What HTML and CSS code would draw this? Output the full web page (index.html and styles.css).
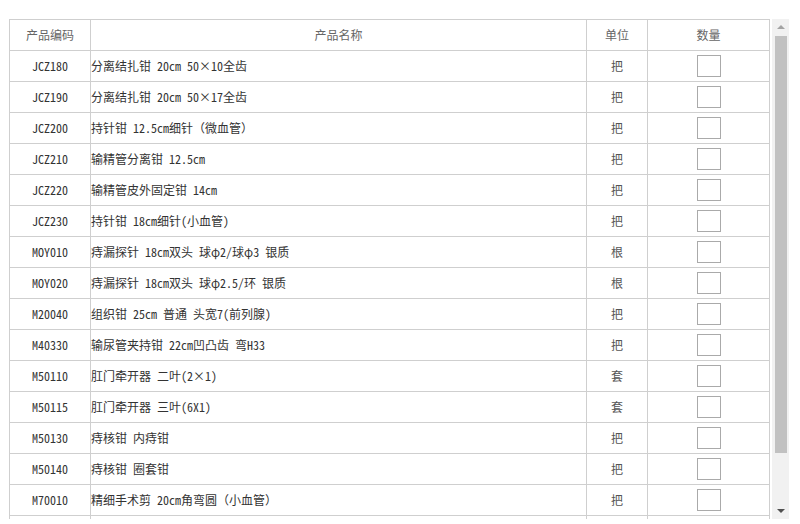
FILE: index.html
```html
<!DOCTYPE html>
<html>
<head>
<meta charset="utf-8">
<link rel="stylesheet" href="styles.css">
</head>
<body>
<div class="frame">
  <div class="viewport">
    <table class="grid">
      <colgroup>
        <col class="c-code"><col class="c-name"><col class="c-unit"><col class="c-qty">
      </colgroup>
      <thead>
        <tr><th>产品编码</th><th>产品名称</th><th>单位</th><th>数量</th></tr>
      </thead>
      <tbody>
        <tr><td class="code">JCZ180</td><td class="name">分离结扎钳 20cm 50×10全齿</td><td class="unit">把</td><td class="qty"><span class="box"></span></td></tr>
        <tr><td class="code">JCZ190</td><td class="name">分离结扎钳 20cm 50×17全齿</td><td class="unit">把</td><td class="qty"><span class="box"></span></td></tr>
        <tr><td class="code">JCZ200</td><td class="name">持针钳 12.5cm细针（微血管）</td><td class="unit">把</td><td class="qty"><span class="box"></span></td></tr>
        <tr><td class="code">JCZ210</td><td class="name">输精管分离钳 12.5cm</td><td class="unit">把</td><td class="qty"><span class="box"></span></td></tr>
        <tr><td class="code">JCZ220</td><td class="name">输精管皮外固定钳 14cm</td><td class="unit">把</td><td class="qty"><span class="box"></span></td></tr>
        <tr><td class="code">JCZ230</td><td class="name">持针钳 18cm细针(小血管)</td><td class="unit">把</td><td class="qty"><span class="box"></span></td></tr>
        <tr><td class="code">MOY010</td><td class="name">痔漏探针 18cm双头 球φ2/球φ3 银质</td><td class="unit">根</td><td class="qty"><span class="box"></span></td></tr>
        <tr><td class="code">MOY020</td><td class="name">痔漏探针 18cm双头 球φ2.5/环 银质</td><td class="unit">根</td><td class="qty"><span class="box"></span></td></tr>
        <tr><td class="code">M20040</td><td class="name">组织钳 25cm 普通 头宽7(前列腺)</td><td class="unit">把</td><td class="qty"><span class="box"></span></td></tr>
        <tr><td class="code">M40330</td><td class="name">输尿管夹持钳 22cm凹凸齿 弯H33</td><td class="unit">把</td><td class="qty"><span class="box"></span></td></tr>
        <tr><td class="code">M50110</td><td class="name">肛门牵开器 二叶(2×1)</td><td class="unit">套</td><td class="qty"><span class="box"></span></td></tr>
        <tr><td class="code">M50115</td><td class="name">肛门牵开器 三叶(6X1)</td><td class="unit">套</td><td class="qty"><span class="box"></span></td></tr>
        <tr><td class="code">M50130</td><td class="name">痔核钳 内痔钳</td><td class="unit">把</td><td class="qty"><span class="box"></span></td></tr>
        <tr><td class="code">M50140</td><td class="name">痔核钳 圈套钳</td><td class="unit">把</td><td class="qty"><span class="box"></span></td></tr>
        <tr><td class="code">M70010</td><td class="name">精细手术剪 20cm角弯圆（小血管）</td><td class="unit">把</td><td class="qty"><span class="box"></span></td></tr>
        <tr><td class="code"></td><td class="name"></td><td class="unit"></td><td class="qty"></td></tr>
      </tbody>
    </table>
  </div>
  <div class="scrollbar">
    <span class="arrow up"></span>
    <div class="track"><div class="thumb"></div></div>
    <span class="arrow down"></span>
  </div>
</div>
</body>
</html>
```

FILE: styles.css
```css
html, body {
  margin: 0;
  padding: 0;
  background: #fff;
}
body {
  padding: 19px 0 0 9px;
  font-family: "Noto Sans Mono CJK SC", "Noto Sans CJK SC", "DejaVu Sans Mono", monospace;
  font-size: 12px;
  color: #333;
}
.frame {
  display: flex;
  width: 780px;
  height: 500px;
}
.viewport {
  width: 763px;
  height: 500px;
  overflow: hidden;
}
.grid {
  border-collapse: collapse;
  width: 760px;
  table-layout: fixed;
}
.c-code { width: 81px; }
.c-name { width: 496px; }
.c-unit { width: 61px; }
.c-qty { width: 122px; }
.grid th, .grid td {
  border: 1px solid #cfcfcf;
  height: 30px;
  padding: 0;
  vertical-align: middle;
  line-height: 14px;
  white-space: nowrap;
}
.grid th {
  font-weight: normal;
  color: #666;
  text-align: center;
}
.code {
  text-align: center;
  color: #333;
}
.name {
  text-align: left;
  color: #333;
}
.unit {
  text-align: center;
  color: #555;
}
.qty {
  text-align: center;
}
.box {
  display: inline-block;
  width: 22px;
  height: 20px;
  border: 1px solid #aaa;
  vertical-align: middle;
  margin-left: 1px;
}
.scrollbar {
  width: 17px;
  height: 500px;
  background: #f1f1f1;
  display: flex;
  flex-direction: column;
  align-items: center;
}
.track {
  flex: 1;
  width: 100%;
  display: flex;
  justify-content: center;
}
.thumb {
  width: 12px;
  height: 417px;
  background: #c1c1c1;
}
.arrow {
  width: 0;
  height: 0;
  border-left: 4px solid transparent;
  border-right: 4px solid transparent;
}
.arrow.up {
  border-bottom: 4px solid #a3a3a3;
  margin: 6px 0 7px;
}
.arrow.down {
  border-top: 4px solid #505050;
  margin: 6px 0 6px;
}
```
